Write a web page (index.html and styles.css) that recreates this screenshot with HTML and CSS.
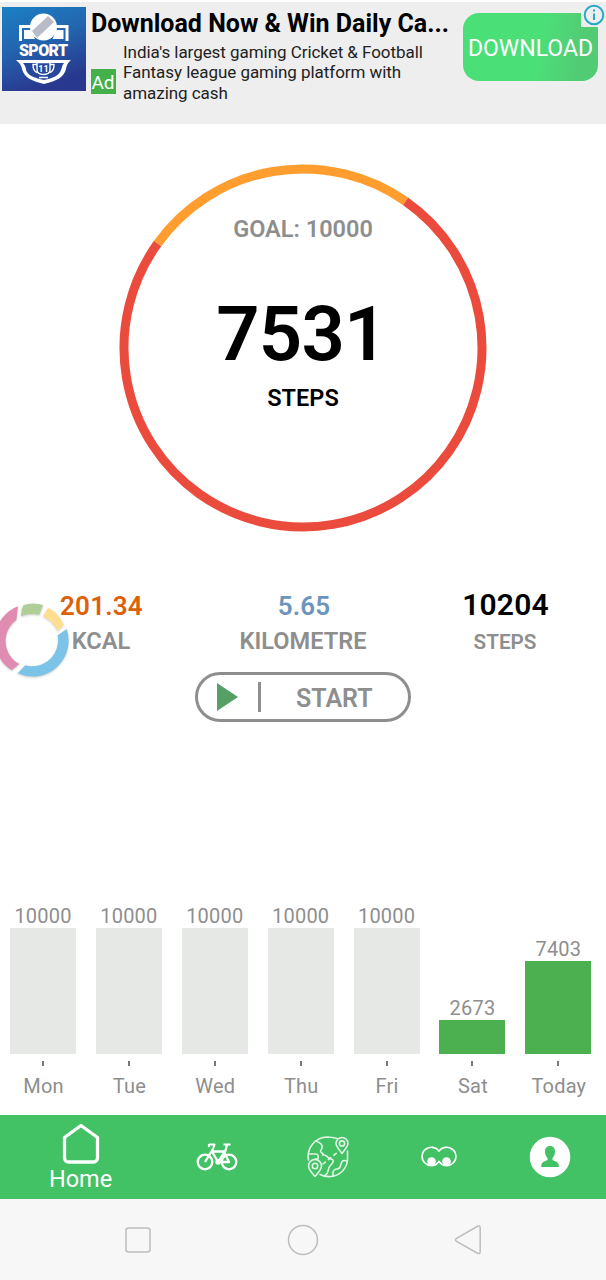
FILE: index.html
```html
<!DOCTYPE html>
<html lang="en">
<head>
    <meta charset="UTF-8" />
    <meta name="viewport" content="width=device-width, initial-scale=1.0" />
    <title>Step Counter</title>
    <link rel="stylesheet" href="styles.css">
</head>
<body>

    <div class="ad">
        <svg class="ad-logo" viewBox="0 0 84 84">
            <defs>
                <linearGradient id="logoBg" x1="0" y1="0" x2="0.35" y2="1">
                    <stop offset="0" stop-color="#1b80c4" />
                    <stop offset="0.5" stop-color="#2364ae" />
                    <stop offset="1" stop-color="#29388f" />
                </linearGradient>
            </defs>
            <rect width="84" height="84" fill="url(#logoBg)" />
            <path d="M29 19.500H18.500V34M54 19.500H65V34" fill="none" stroke="#fff" stroke-width="3" />
            <path d="M22 23h7l4 9H22zM61.500 23h-7l-4 9h11z" fill="#fff" />
            <circle cx="41.500" cy="20" r="13.500" fill="#fff" />
            <path d="M30 24L46 9l6 6-17 16z" fill="#b9bcc8" />
            <text x="41.500" y="49" text-anchor="middle" textLength="49" class="logo-name">SPORT</text>
            <path d="M14 53h55c-3 3-4 4-5 9-2 8-9 12-22 15-13-3-20-7-22-15-1-5-3-6-6-9z" fill="#fff" />
            <path d="M21 56h41c-2 2-2 5-3 7-2 6-8 8-17 10-9-2-16-4-18-10 0-2-1-5-3-7z" fill="#27479c" />
            <path d="M35 55.500h13v7c0 4-3 5-6.500 5s-6.500-1-6.500-5zM35 57.500h-4c0 5 1 7 4 8M48 57.500h4c0 5-1 7-4 8M37 70.500h9" fill="none" stroke="#fff" stroke-width="1.400" />
            <text x="41.500" y="65" text-anchor="middle" class="logo-num">11</text>
        </svg>
        <span class="ad-badge">Ad</span>
        <div class="ad-text">
            <div class="ad-title">Download Now &amp; Win Daily Ca...</div>
            <div class="ad-desc">India's largest gaming Cricket &amp; Football<br>Fantasy league gaming platform with<br>amazing cash</div>
        </div>
        <button class="ad-btn">DOWNLOAD</button>
        <div class="ad-info">
            <svg width="22" height="22" viewBox="0 0 22 22">
                <circle cx="11" cy="11" r="9.300" fill="none" stroke="#27a9c9" stroke-width="2" />
                <path d="M11 9.500v6.500M11 5.500v2" stroke="#27a9c9" stroke-width="2" />
            </svg>
        </div>
    </div>

    <div class="goal">
        <svg class="goal-ring" viewBox="0 0 368 368">
            <path d="M286.500 37.200A179 179 0 1 1 38.600 79.500" stroke="#eb4b3c" />
            <path d="M38.600 79.500A179 179 0 0 1 286.500 37.200" stroke="#ff9e2e" />
        </svg>
        <div class="goal-label">GOAL: 10000</div>
        <div class="goal-count">7531</div>
        <div class="goal-unit">STEPS</div>
    </div>

    <div class="stats">
        <div class="stat kcal">
            <div class="value">201.34</div>
            <div class="label">KCAL</div>
        </div>
        <div class="stat km">
            <div class="value">5.65</div>
            <div class="label">KILOMETRE</div>
        </div>
        <div class="stat total">
            <div class="value">10204</div>
            <div class="label">STEPS</div>
        </div>
        <!-- floating donut -->
        <svg class="donut" viewBox="0 60 222 240">
            <path d="M57 79A108 108 0 0 0 38 271L61 252A78 78 0 0 1 52 120Z" fill="#e08bb0" />
            <path d="M74 75Q101 66 132 75L121 104Q95 98 66 108Q65 88 74 75Z" fill="#b0cf97" />
            <path d="M148 83Q178 98 194 134L176 152Q161 122 132 109Z" fill="#ffdf8f" />
            <path d="M203 147A108 108 0 0 1 56 280L79 256A78 78 0 0 0 176 166Z" fill="#7cc3e8" />
        </svg>
    </div>

    <button class="start">
        <svg width="21" height="28" viewBox="0 0 21 28"><path d="M0 0L21 14L0 28Z" fill="#56a066" /></svg>
        <span class="divider"></span>
        <span class="start-text">START</span>
    </button>

    <div class="chart" id="chart"></div>

    <nav class="tabs">
        <div class="tab home">
            <svg width="38" height="42" viewBox="0 0 38 42">
                <path d="M19 2.500L35.500 14.500V35a4 4 0 0 1-4 4h-25a4 4 0 0 1-4-4V14.500Z" fill="none" stroke="#fff" stroke-width="3.300" stroke-linejoin="round" />
            </svg>
            <span>Home</span>
        </div>
        <div class="tab">
            <svg width="42" height="30" viewBox="0 0 42 30" fill="none" stroke="#fff" stroke-width="2.300" stroke-linejoin="round">
                <circle cx="9" cy="20" r="7.300" />
                <circle cx="33" cy="20" r="7.300" />
                <path d="M9 20L17 7M16 9.500L22 20H33L28 9.500H16M22 20L30 8M29 10L31 3" />
                <path d="M27.500 2.500H34.500M17 7L18.500 2.500H13.500Q12 3 13.500 5" stroke-width="2" />
                <circle cx="22" cy="20" r="1.500" />
            </svg>
        </div>
        <div class="tab">
            <svg width="42" height="42" viewBox="0 0 42 42" fill="none" stroke="#e0f6e6" stroke-width="1.600" stroke-linejoin="round" stroke-linecap="round">
                <path d="M30 2.500Q25 1 20 1A19.500 19.500 0 0 0 1.500 24M13 38.500Q18 41 24 40.500A18 18 0 0 0 40.500 24V15" />
                <path d="M35 17.500C31 12.500 29 10 29 7.500a6 6 0 0 1 12 0C41 10 39 12.500 35 17.500Z" />
                <circle cx="35" cy="7.500" r="2.600" />
                <path d="M8 40.500C3.500 35.500 1.500 33 1.500 30a6.500 6.500 0 0 1 13 0C14.500 33 12.500 35.500 8 40.500Z" />
                <circle cx="8" cy="30" r="2.700" />
                <path d="M9 5C14 7 16 9 15 12S12 15 15 17 14 19 17 19 20 22 24 23 26 27 23 30 23 36 18 39.500" />
                <path d="M2 18H9Q12 18 11 23H8M26 39.500V36Q27 33 30 33T34 28T40 25" />
                <path d="M16 28L32 15" stroke-dasharray="3 4" />
            </svg>
        </div>
        <div class="tab">
            <svg width="36" height="22" viewBox="0 0 36 22" fill="none" stroke="#fff" stroke-width="1.600">
                <path d="M18 5C15 1 9 0 5 3C0 6 0 14 4 17C7 20 11 20.500 15 18.500L18 15.500L21 18.500C25 20.500 29 20 32 17C36 14 36 6 31 3C27 0 21 1 18 5Z" />
                <circle cx="10.500" cy="15.500" r="4.300" fill="#fff" stroke="none" />
                <circle cx="25.500" cy="15.500" r="4.300" fill="#fff" stroke="none" />
            </svg>
        </div>
        <div class="tab">
            <svg width="42" height="42" viewBox="0 0 42 42">
                <circle cx="21" cy="21" r="20.300" fill="#fff" />
                <path d="M21 10C17.500 10 16 12.500 16 15.500C16 18.500 17 20.500 18.500 22V24L14 26Q12.300 27 12 31H30Q29.700 27 28 26L23.500 24V22C25 20.500 26 18.500 26 15.500C26 12.500 24.500 10 21 10Z" fill="#43c165" />
            </svg>
        </div>
    </nav>

    <div class="sysbar">
        <svg width="32" height="32" viewBox="0 0 32 32"><rect x="4" y="4" width="24" height="24" rx="2.500" /></svg>
        <svg width="32" height="32" viewBox="0 0 32 32"><circle cx="16" cy="16" r="14.500" /></svg>
        <svg width="32" height="32" viewBox="0 0 32 32"><path d="M4.500 14.300L25.500 2.300Q28.200 1.300 28.200 4V27.500Q28.200 30.300 25.500 29.200L4.500 17.300Q2.500 15.800 4.500 14.300Z" /></svg>
    </div>

    <script>
        const days = [
            ['Mon', 10000, false],
            ['Tue', 10000, false],
            ['Wed', 10000, false],
            ['Thu', 10000, false],
            ['Fri', 10000, false],
            ['Sat', 2673, true],
            ['Today', 7403, true]
        ];
        const fullHeight = 126; // bar height at 10000 steps

        document.getElementById('chart').innerHTML = days.map(([day, steps, active]) => `
            <div class="day">
                <div class="steps">${steps}</div>
                <div class="bar ${active ? 'active' : ''}" style="height: ${(steps / 10000 * fullHeight).toFixed(1)}px"></div>
                <div class="tick"></div>
                <div class="name">${day}</div>
            </div>`).join('');
    </script>
</body>
</html>
```
FILE: styles.css
```css
html, body {
    margin: 0;
    padding: 0;
}

body {
    width: 606px;
    height: 1280px;
    background: #fff;
    font-family: Roboto, "Liberation Sans", sans-serif;
    color: #000;
    display: flex;
    flex-direction: column;
    overflow: hidden;
}

button {
    font-family: inherit;
    padding: 0;
    cursor: pointer;
}

/* ad banner */
.ad {
    position: relative;
    box-sizing: border-box;
    height: 122px;
    margin-top: 2px;
    padding-left: 2px;
    background: #eee;
    display: flex;
    align-items: flex-start;
}

.ad-logo {
    width: 84px;
    height: 84px;
    margin-top: 5px;
}

.logo-name {
    font-size: 16px;
    font-weight: 900;
    fill: #fff;
}

.logo-num {
    font-size: 9px;
    font-weight: 700;
    fill: #fff;
}

.ad-badge {
    width: 25px;
    height: 25px;
    margin: 67px 0 0 5px;
    background: #43b049;
    color: #fff;
    font-size: 19px;
    line-height: 28px;
    text-align: center;
    text-indent: -1px;
}

.ad-text {
    width: 347px;
    margin-left: -25px;
    white-space: nowrap;
}

.ad-title {
    font-size: 25px;
    font-weight: 700;
    line-height: 30px;
    margin-top: 7px;
}

.ad-desc {
    margin: 3px 0 0 32px;
    font-size: 17px;
    line-height: 20.3px;
    letter-spacing: -0.05px;
    color: #222;
}

.ad-btn {
    width: 135px;
    height: 68px;
    margin: 11px 0 0 25px;
    border: none;
    border-radius: 16px;
    background: linear-gradient(100deg, #4be077 55%, #52cb75 85%);
    color: #fff;
    font-size: 23px;
    line-height: 71px;
}

.ad-info {
    position: absolute;
    top: 0;
    right: 0;
    width: 25px;
    height: 25px;
    background: #eee;
    display: flex;
    align-items: center;
    justify-content: center;
}

/* goal circle */
.goal {
    position: relative;
    width: 368px;
    height: 368px;
    margin: 40px 0 0 119px;
    text-align: center;
    font-weight: 600;
    flex-shrink: 0;
}

.goal-ring {
    position: absolute;
    inset: 0;
    fill: none;
    stroke-width: 9px;
}

.goal-label {
    padding-top: 50px;
    font-size: 23.5px;
    line-height: 30px;
    color: #8e8e8e;
}

.goal-count {
    margin: 48px 3px 0 0;
    font-size: 76px;
    line-height: 84px;
    letter-spacing: -0.8px;
}

.goal-unit {
    margin-top: 7px;
    font-size: 23.5px;
    line-height: 30px;
}

/* kcal / km / steps */
.stats {
    position: relative;
    height: 72px;
    margin-top: 55px;
    display: grid;
    grid-template-columns: repeat(3, 202px);
    text-align: center;
    font-weight: 600;
    flex-shrink: 0;
}

.value {
    font-size: 26px;
    line-height: 38px;
    letter-spacing: 0.2px;
    padding-left: 1px;
}

.label {
    font-size: 23.6px;
    line-height: 32px;
    color: #8e8e8e;
}

.kcal .value {
    color: #dc6107;
}

.km .value {
    color: #6d94bd;
    padding-left: 2px;
}

.total .value {
    font-size: 30px;
    line-height: 36px;
}

.total .label {
    font-size: 20.7px;
    line-height: 38px;
}

.donut {
    position: absolute;
    left: -1px;
    top: 13px;
    width: 74px;
    height: 80px;
    filter: drop-shadow(0 1px 1px rgba(0, 0, 0, 0.2));
}

.start {
    box-sizing: border-box;
    width: 216px;
    height: 50px;
    margin: 13px 0 0 195px;
    padding-left: 19px;
    border: 3px solid #8e8e8e;
    border-radius: 25px;
    background: #fff;
    color: #8e8e8e;
    font-size: 25px;
    font-weight: 600;
    display: flex;
    align-items: center;
    flex-shrink: 0;
}

.start-text {
    padding-top: 2px;
}

.divider {
    width: 3px;
    height: 30px;
    margin: 0 35px 0 20px;
    background: #8e8e8e;
}

/* weekly chart */
.chart {
    height: 197px;
    margin: auto 5px 12px 10px;
    display: flex;
    gap: 19.9px;
    align-items: flex-end;
}

.day {
    width: 66px;
    text-align: center;
    font-size: 20px;
    letter-spacing: 0.2px;
    color: #8e8e8e;
    flex-shrink: 0;
}

.steps {
    line-height: 24px;
}

.bar {
    background: #e6e8e5;
}

.bar.active {
    background: #4caf50;
}

.tick {
    width: 2px;
    height: 5px;
    margin: 7px auto 5px;
    background: #777;
}

.name {
    line-height: 30px;
    padding: 0 0 2px 1px;
}

/* bottom tabs */
.tabs {
    height: 84px;
    background: #43c165;
    display: grid;
    grid-template-columns: 161px repeat(4, 111px);
    flex-shrink: 0;
}

.tab {
    display: flex;
    align-items: center;
    justify-content: center;
    color: #fff;
}

.home {
    flex-direction: column;
    font-size: 23.5px;
    padding-top: 2px;
}

.home span {
    line-height: 28px;
}

.sysbar {
    height: 81px;
    background: #f7f7f7;
    display: flex;
    align-items: center;
    justify-content: center;
    gap: 133px;
    flex-shrink: 0;
}

.sysbar svg {
    fill: none;
    stroke: #bdbdbd;
    stroke-width: 1.5px;
}
```
